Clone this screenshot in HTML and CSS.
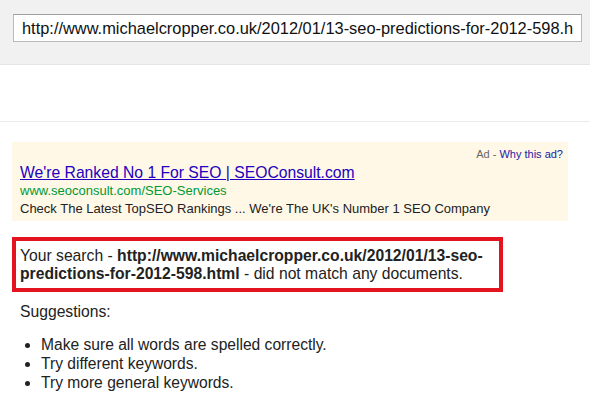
FILE: index.html
```html
<!DOCTYPE html>
<html lang="en">
<head>
	<meta charset="UTF-8">
	<title>Google Search</title>
	<link rel="stylesheet" href="styles.css">
</head>
<body>
	<div class="topbar">
		<input class="query" type="text" value="http://www.michaelcropper.co.uk/2012/01/13-seo-predictions-for-2012-598.html">
	</div>
	<div class="gap"></div>
	<div class="content">
		<div class="ad">
			<div class="ad-label">Ad - <a href="#">Why this ad?</a></div>
			<a class="ad-title" href="#">We're Ranked No 1 For SEO | SEOConsult.com</a>
			<div class="ad-url">www.seoconsult.com/SEO-Services</div>
			<div class="ad-desc">Check The Latest TopSEO Rankings ... We're The UK's Number 1 SEO Company</div>
		</div>
		<div class="nomatch">
			Your search - <b>http://www.michaelcropper.co.uk/2012/01/13-seo-predictions-for-2012-598.html</b> - did not match any documents.
		</div>
		<p class="sugg">Suggestions:</p>
		<ul class="tips">
			<li>Make sure all words are spelled correctly.</li>
			<li>Try different keywords.</li>
			<li>Try more general keywords.</li>
		</ul>
	</div>
</body>
</html>
```

FILE: styles.css
```css
*{
	margin: 0;
	padding: 0;
}
body{
	font-family: "Liberation Sans", Arial, sans-serif;
	color: #222;
	background: #fff;
}
.topbar{
	height: 50px;
	padding: 14px 0 0 13px;
	background: #f1f1f1;
	border-bottom: 1px solid #e5e5e5;
}
.query{
	display: block;
	width: 569px;
	height: 28px;
	box-sizing: border-box;
	padding: 0 8px;
	border: 1px solid #b9b9b9;
	border-top-color: #a0a0a0;
	font: 16.4px "Liberation Sans", Arial, sans-serif;
	color: #111;
	outline: none;
}
.gap{
	height: 56px;
	border-bottom: 1px solid #ebebeb;
}
.content{
	padding: 20px 0 0 12px;
}
.ad{
	width: 548px;
	height: 73px;
	padding: 6px 0 0 8px;
	background: #fff8e7;
}
.ad-label{
	font-size: 11px;
	line-height: 13px;
	color: #666;
	text-align: right;
	padding-right: 5px;
}
.ad-label a{
	color: #1a1aa6;
	text-decoration: none;
}
.ad-title{
	display: inline-block;
	margin-top: 3px;
	font-size: 15.7px;
	line-height: 18px;
	color: #2200c1;
	text-decoration: underline;
}
.ad-url{
	font-size: 13px;
	line-height: 18px;
	color: #009933;
}
.ad-desc{
	font-size: 13px;
	line-height: 18px;
	color: #222;
}
.nomatch{
	width: 475px;
	margin-top: 16px;
	padding: 6px 4px 5px 4px;
	border: 4px solid #e3141f;
	font-size: 15.7px;
	line-height: 18px;
}
.sugg{
	margin-top: 10px;
	margin-left: 8px;
	font-size: 15.7px;
	line-height: 20px;
}
.tips{
	margin: 13px 0 0 29px;
	font-size: 15.6px;
	line-height: 19px;
}
```
